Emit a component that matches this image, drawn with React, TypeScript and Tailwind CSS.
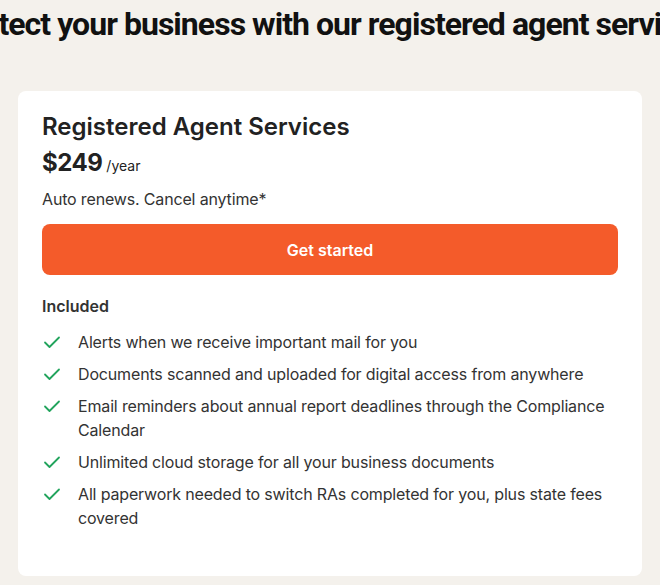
import React from 'react';

const features = [
  'Alerts when we receive important mail for you',
  'Documents scanned and uploaded for digital access from anywhere',
  'Email reminders about annual report deadlines through the Compliance Calendar',
  'Unlimited cloud storage for all your business documents',
  'All paperwork needed to switch RAs completed for you, plus state fees covered',
];

const Check = () => (
  <svg width="20" height="20" viewBox="0 0 20 20" fill="none" className="shrink-0 mt-[2px]">
    <path d="M3 10.5l4.5 4.5L17 5.5" stroke="#22a45d" strokeWidth="1.8" strokeLinecap="round" strokeLinejoin="round" />
  </svg>
);

const App = () => {
  return (
    <div className="min-h-[585px] bg-[#f4f1ec] overflow-hidden" style={{ fontFamily: 'Inter, "Open Sans", sans-serif' }}>
      <div className="flex justify-center pt-[4px] h-[91px]">
        <h1
          className="whitespace-nowrap text-[32px] leading-[40px] font-bold tracking-[-0.03em] text-[#111]"
          style={{ fontFamily: 'Roboto, "Liberation Sans", sans-serif' }}
        >
          Protect your business with our registered agent services
        </h1>
      </div>
      <div className="mx-[18px] bg-white rounded-lg px-6 pt-[18px] pb-[46px]">
        <h2 className="text-[24px] leading-[36px] font-semibold text-[#222]">Registered Agent Services</h2>
        <div className="flex items-baseline gap-1">
          <span className="text-[24px] leading-[36px] font-bold text-[#222] tracking-[-0.02em]">$249</span>
          <span className="text-sm text-[#222]">/year</span>
        </div>
        <p className="mt-[6px] text-base leading-6 text-[#333] tracking-[-0.01em]">Auto renews. Cancel anytime*</p>
        <button className="mt-[13px] w-full h-[51px] rounded-lg bg-[#f45b2a] text-white font-semibold text-base">
          Get started
        </button>
        <h3 className="mt-[19px] text-base leading-6 font-semibold text-[#333]">Included</h3>
        <ul className="mt-3 flex flex-col gap-2">
          {features.map((f) => (
            <li key={f} className="flex gap-[16px] text-base leading-6 text-[#333] tracking-[-0.01em]">
              <Check />
              <span>{f}</span>
            </li>
          ))}
        </ul>
      </div>
    </div>
  );
};

export default App;
